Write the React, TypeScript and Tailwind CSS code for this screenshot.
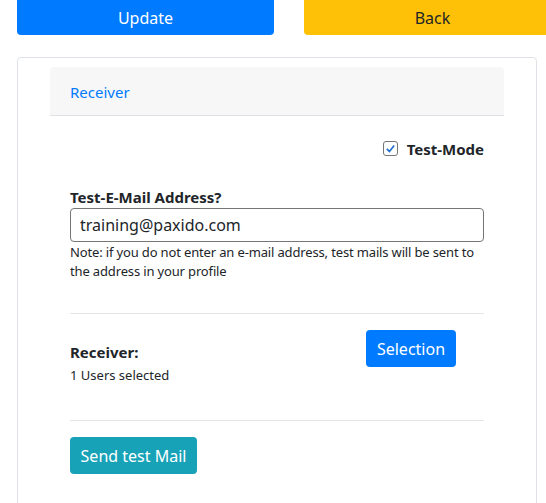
export default function App() {
  return (
    <div
      className="w-[546px] h-[503px] overflow-hidden bg-white text-[#212529]"
      style={{ fontFamily: '"Noto Sans", "Open Sans", sans-serif' }}
    >
      <div className="flex gap-[30px] pl-[17px]">
        <button className="w-[257px] h-[35px] shrink-0 rounded-b bg-[#007bff] text-white text-[16px]">
          Update
        </button>
        <button className="w-[257px] h-[35px] shrink-0 rounded-b bg-[#ffc107] text-[#212529] text-[16px]">
          Back
        </button>
      </div>

      <div className="ml-[17px] mt-[22px] w-[520px] h-[460px] rounded border border-[#dee2e6] pt-[9px] px-[32px]">
        <div className="w-[454px]">
          <div className="h-[49px] bg-[#f7f7f7] border-b border-[#dee2e6] rounded-t flex items-center px-[20px] pt-[2px]">
            <span className="text-[#007bff] text-[15px]">Receiver</span>
          </div>

          <div className="px-[20px]">
            <div className="flex justify-end items-center gap-[9px] mt-[23px] h-[20px]">
              <span className="w-[15px] h-[15px] -mt-[2px] rounded-[3px] border border-[#767676] flex items-center justify-center">
                <svg width="11" height="11" viewBox="0 0 12 12">
                  <path d="M2 6.5 L4.8 9.2 L10 2.8" fill="none" stroke="#1f6fd1" strokeWidth="1.8" />
                </svg>
              </span>
              <span className="font-bold text-[15px]">Test-Mode</span>
            </div>

            <div className="mt-[27px] font-bold text-[15px] leading-[22px]">Test-E-Mail Address?</div>
            <div className="h-[34px] rounded border border-[#767676] flex items-center px-[9px] text-[16px]">
              training@paxido.com
            </div>
            <p className="mt-[1px] text-[13px] leading-[19px] tracking-[-0.15px]">
              Note: if you do not enter an e-mail address, test mails will be sent to the address in your profile
            </p>

            <div className="mt-[32px] border-t border-[#e5e5e5]" />

            <div className="flex h-[106px]">
              <div className="flex-1 pt-[27px]">
                <div className="font-bold text-[15px] leading-[22px]">Receiver:</div>
                <div className="mt-[3px] text-[13px] leading-[19px]">1 Users selected</div>
              </div>
              <div className="w-[118px] pt-[16px]">
                <button className="w-[90px] h-[37px] rounded bg-[#007bff] text-white text-[16px]">
                  Selection
                </button>
              </div>
            </div>

            <div className="border-t border-[#e5e5e5]" />

            <button className="mt-[16px] w-[127px] h-[37px] rounded bg-[#17a2b8] text-white text-[16px]">
              Send test Mail
            </button>
          </div>
        </div>
      </div>
    </div>
  );
}
